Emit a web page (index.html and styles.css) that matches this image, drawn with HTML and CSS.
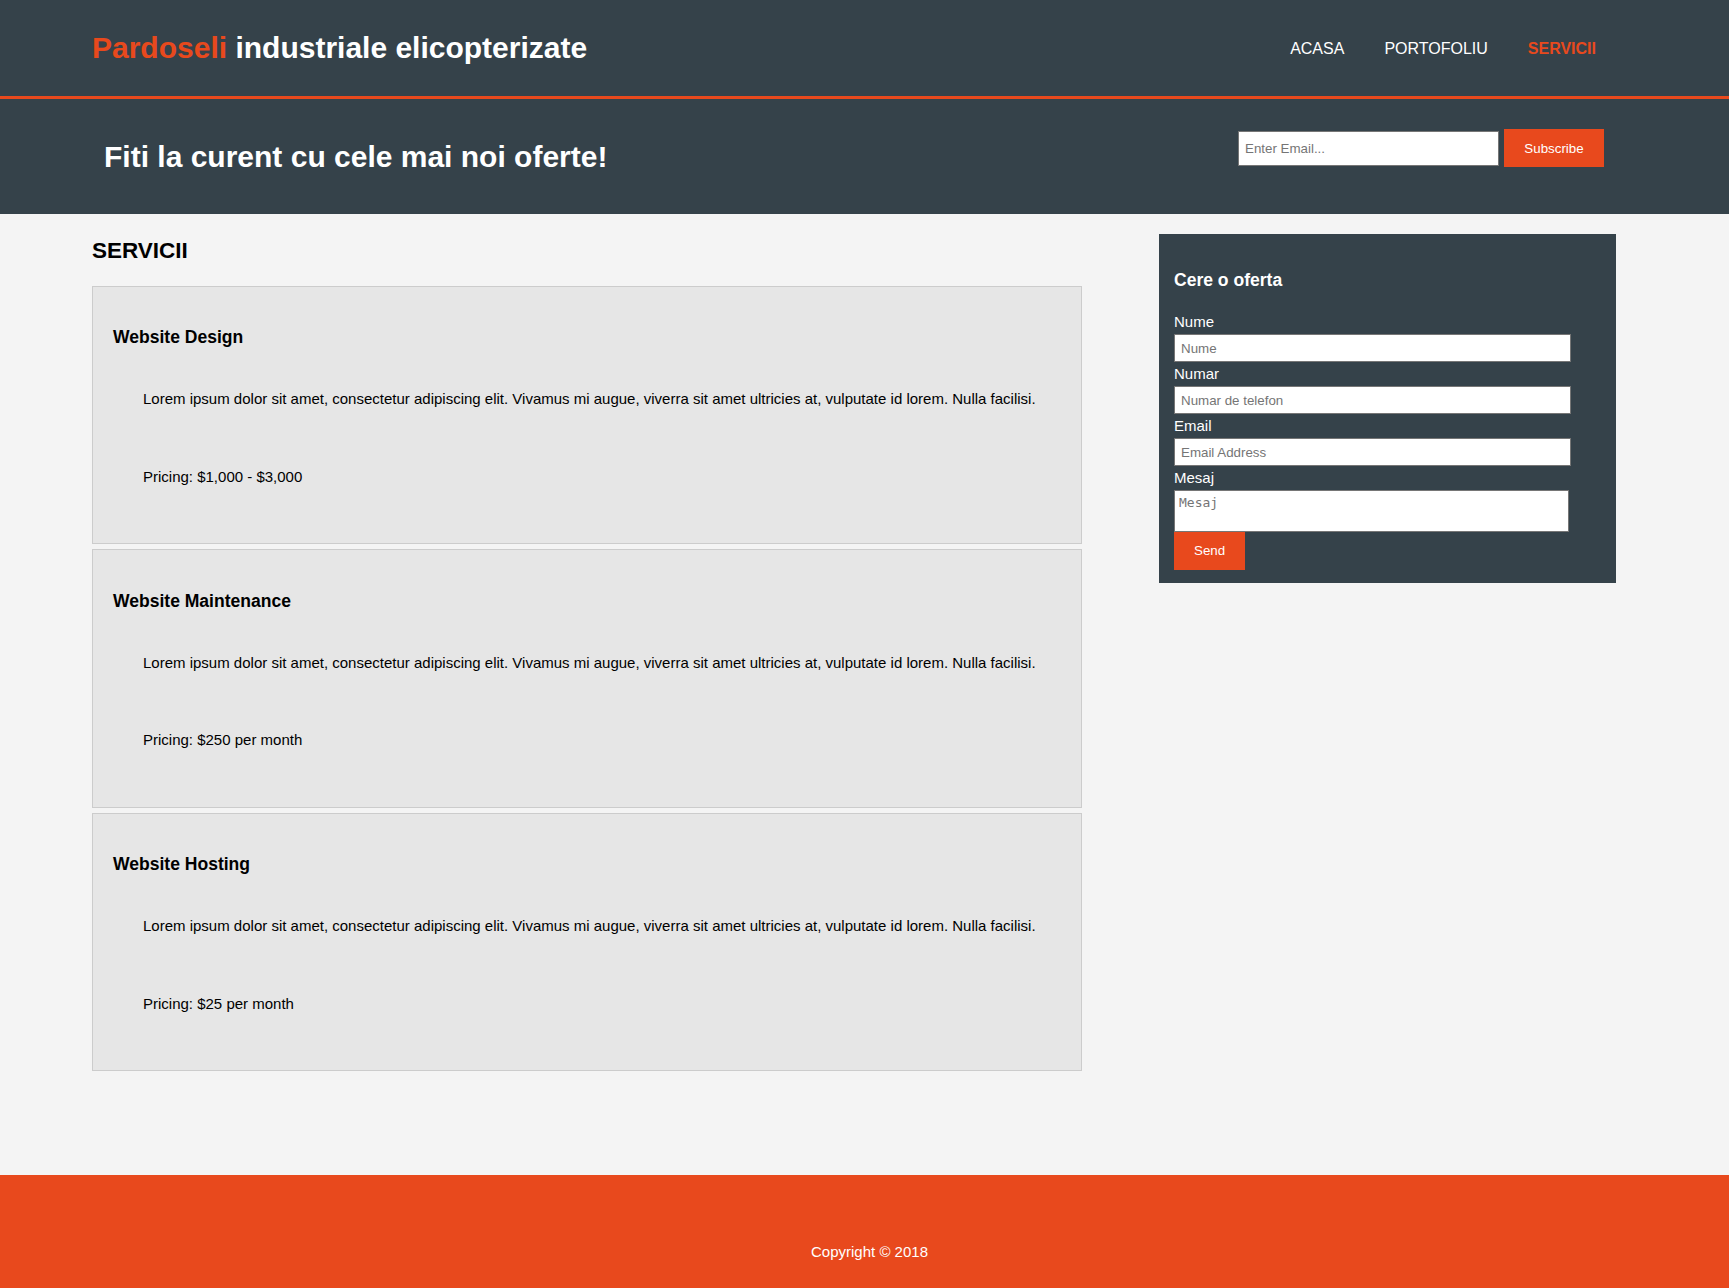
FILE: index.html
```html
<!DOCTYPE html>
<html lang="ro">
<head>
<meta charset="utf-8">
<title>Pardoseli industriale elicopterizate | Servicii</title>
<link rel="stylesheet" href="styles.css">
</head>
<body>
<header class="site-header">
  <div class="container header-inner">
    <div class="branding">
      <h1 class="brand-title"><span class="highlight">Pardoseli</span> industriale elicopterizate</h1>
    </div>
    <nav class="main-nav">
      <ul class="nav-list">
        <li class="nav-item"><a class="nav-link" href="#">Acasa</a></li>
        <li class="nav-item"><a class="nav-link" href="#">Portofoliu</a></li>
        <li class="nav-item current"><a class="nav-link" href="#">Servicii</a></li>
      </ul>
    </nav>
  </div>
</header>

<section class="newsletter">
  <div class="container newsletter-inner">
    <h1 class="newsletter-title">Fiti la curent cu cele mai noi oferte!</h1>
    <form class="newsletter-form">
      <input class="newsletter-input" type="email" placeholder="Enter Email...">
      <button class="button-1 subscribe-btn" type="submit">Subscribe</button>
    </form>
  </div>
</section>

<section class="main">
  <div class="container main-inner">
    <article class="main-col">
      <h1 class="page-title">SERVICII</h1>
      <ul class="services">
        <li class="service">
          <h3 class="service-title">Website Design</h3>
          <p class="service-text">Lorem ipsum dolor sit amet, consectetur adipiscing elit. Vivamus mi augue, viverra sit amet ultricies at, vulputate id lorem. Nulla facilisi.</p>
          <p class="service-text">Pricing: $1,000 - $3,000</p>
        </li>
        <li class="service">
          <h3 class="service-title">Website Maintenance</h3>
          <p class="service-text">Lorem ipsum dolor sit amet, consectetur adipiscing elit. Vivamus mi augue, viverra sit amet ultricies at, vulputate id lorem. Nulla facilisi.</p>
          <p class="service-text">Pricing: $250 per month</p>
        </li>
        <li class="service">
          <h3 class="service-title">Website Hosting</h3>
          <p class="service-text">Lorem ipsum dolor sit amet, consectetur adipiscing elit. Vivamus mi augue, viverra sit amet ultricies at, vulputate id lorem. Nulla facilisi.</p>
          <p class="service-text">Pricing: $25 per month</p>
        </li>
      </ul>
    </article>

    <aside class="sidebar">
      <div class="dark">
        <h3 class="quote-title">Cere o oferta</h3>
        <form class="quote">
          <label class="quote-label">Nume</label>
          <input class="quote-input" type="text" placeholder="Nume">
          <label class="quote-label">Numar</label>
          <input class="quote-input" type="text" placeholder="Numar de telefon">
          <label class="quote-label">Email</label>
          <input class="quote-input" type="email" placeholder="Email Address">
          <label class="quote-label">Mesaj</label>
          <textarea class="quote-textarea" placeholder="Mesaj"></textarea>
          <button class="button-1 send-btn" type="submit">Send</button>
        </form>
      </div>
    </aside>
  </div>
</section>

<footer class="site-footer">
  <p class="footer-text">Copyright &copy; 2018</p>
</footer>
</body>
</html>
```

FILE: styles.css
```css
html, body {
  margin: 0;
  padding: 0;
}

body {
  font: 15px/1.5 "Liberation Sans", Arial, Helvetica, sans-serif;
  background-color: #f4f4f4;
  color: #000000;
  min-height: 100vh;
  display: flex;
  flex-direction: column;
}

.container {
  width: 1524px;
  margin-left: 92px;
}

ul {
  margin: 0;
  padding: 0;
}

.button-1 {
  height: 38px;
  background: #e8491d;
  border: 0;
  padding: 0 20px;
  color: #ffffff;
  font: 13.33px "Liberation Sans", Arial, sans-serif;
  cursor: pointer;
}

/* Header */
.site-header {
  background: #35424a;
  color: #ffffff;
  height: 96px;
  border-bottom: 3px solid #e8491d;
  flex: none;
}

.header-inner {
  display: flex;
  justify-content: space-between;
  align-items: flex-start;
}

.brand-title {
  margin: 25px 0 0;
  font-size: 30px;
  line-height: 45px;
  font-weight: bold;
}

.highlight {
  color: #e8491d;
}

.main-nav {
  margin-top: 38px;
}

.nav-list {
  display: flex;
  list-style: none;
  font-size: 16px;
  line-height: 22px;
}

.nav-item {
  padding: 0 20px;
}

.nav-link {
  color: #ffffff;
  text-decoration: none;
  text-transform: uppercase;
  font-size: 16px;
}

.nav-item.current .nav-link {
  color: #e8491d;
  font-weight: bold;
}

/* Newsletter */
.newsletter {
  background: #35424a;
  color: #ffffff;
  padding: 15px 0;
  flex: none;
}

.newsletter-inner {
  display: flex;
  justify-content: space-between;
  align-items: flex-start;
  box-sizing: border-box;
  padding: 0 12px;
}

.newsletter-title {
  margin: 20px 0;
  font-size: 30px;
  line-height: 45px;
  font-weight: bold;
}

.newsletter-form {
  margin-top: 15px;
  display: flex;
  align-items: center;
  gap: 5px;
}

.newsletter-input {
  box-sizing: border-box;
  width: 261px;
  height: 35px;
  padding: 0 6px;
  border: 1px solid #767676;
  font: 13.33px "Liberation Sans", Arial, sans-serif;
  color: #000;
  background: #fff;
  outline: none;
}

.newsletter-input::placeholder,
.quote-input::placeholder {
  color: #757575;
}

.subscribe-btn {
  width: 100px;
}

/* Main */
.main {
  flex: none;
  padding-bottom: 99px;
}

.main-inner {
  display: flex;
  justify-content: space-between;
  align-items: flex-start;
}

.main-col {
  width: 990px;
  padding-top: 20px;
}

.page-title {
  margin: 0 0 18px;
  font-size: 22.5px;
  line-height: 33.75px;
  font-weight: bold;
}

.services {
  list-style: none;
}

.service {
  padding: 20px;
  border: 1px solid #cccccc;
  margin-bottom: 5px;
  background: #e6e6e6;
}

.service-title {
  margin: 17.55px 0;
  font-size: 17.55px;
  line-height: 26.33px;
  font-weight: bold;
}

.service-text {
  margin: 15px 0;
  padding: 20px 0 20px 30px;
  line-height: 22.5px;
}

/* Sidebar */
.sidebar {
  width: 457px;
  margin-top: 20px;
}

.dark {
  padding: 15px 15px 13px;
  background: #35424a;
  color: #ffffff;
}

.quote-title {
  margin: 17.5px 0;
  font-size: 17.55px;
  line-height: 26.33px;
  font-weight: bold;
}

.quote {
  display: flex;
  flex-direction: column;
  align-items: flex-start;
}

.quote-label {
  display: block;
  line-height: 23.6px;
}

.quote-input {
  display: block;
  box-sizing: border-box;
  width: 397px;
  height: 28.4px;
  padding: 0 6px;
  border: 1px solid #767676;
  font: 13.33px "Liberation Sans", Arial, sans-serif;
  background: #fff;
  outline: none;
}

.quote-textarea {
  display: block;
  box-sizing: border-box;
  width: 395px;
  height: 42px;
  padding: 4px 4px;
  border: 1px solid #767676;
  font: 13px/15px "DejaVu Sans Mono", "Liberation Mono", monospace;
  background: #fff;
  resize: none;
  outline: none;
}

.quote-textarea::placeholder {
  color: #757575;
}

.send-btn {
  width: 71px;
}

/* Footer */
.site-footer {
  flex: 1 0 auto;
  background-color: #e8491d;
  color: #ffffff;
  text-align: center;
  padding: 66px 0 0 10px;
}

.footer-text {
  margin: 0;
  line-height: 22.5px;
}
```
